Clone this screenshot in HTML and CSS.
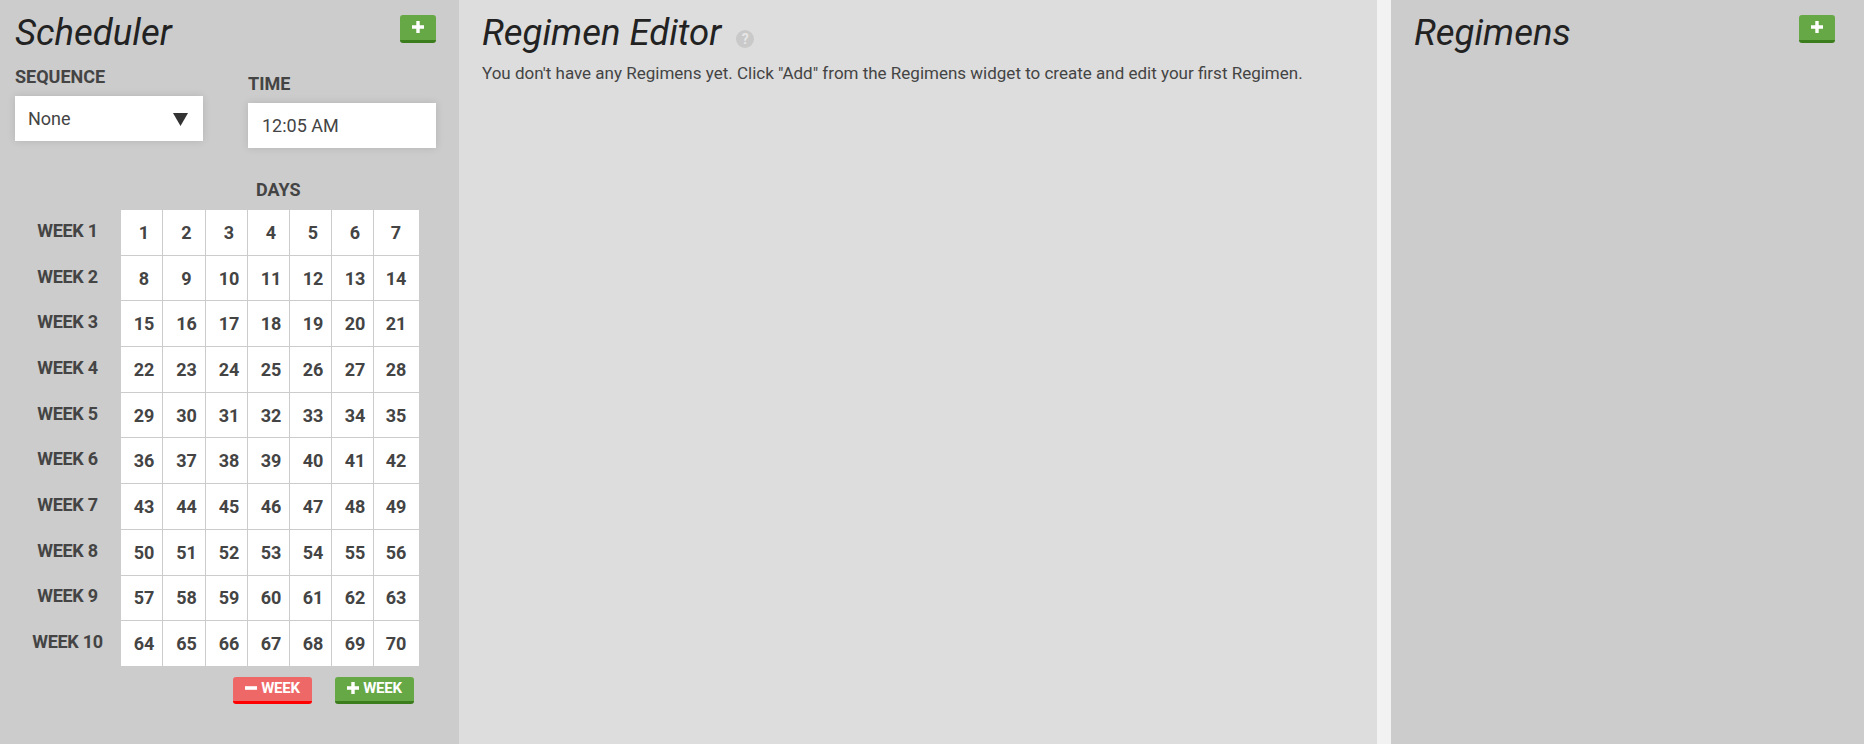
FILE: index.html
```html
<!DOCTYPE html>
<html lang="en">
<head>
<meta charset="utf-8">
<title>Regimens</title>
<link rel="stylesheet" href="styles.css">
</head>
<body>
<div class="app">
  <section class="panel scheduler">
    <div class="panel-head">
      <h3 class="title">Scheduler</h3>
      <button class="add-btn" type="button" aria-label="Add">
        <svg width="12" height="12" viewBox="0 0 12 12"><path d="M6 0v12M0 6h12" stroke="#fff" stroke-width="3.4"/></svg>
      </button>
    </div>
    <div class="fields">
      <div class="field">
        <label class="field-label">SEQUENCE</label>
        <div class="box select">
          <span>None</span>
          <svg class="caret" width="15" height="13" viewBox="0 0 15 13"><polygon points="0,0 15,0 7.5,13" fill="#333"/></svg>
        </div>
      </div>
      <div class="field field-time">
        <label class="field-label">TIME</label>
        <div class="box input">12:05 AM</div>
      </div>
    </div>
    <div class="days-label">DAYS</div>
    <div class="calendar">
      <div class="week">WEEK 1</div><div class="day">1</div><div class="day">2</div><div class="day">3</div><div class="day">4</div><div class="day">5</div><div class="day">6</div><div class="day last">7</div>
      <div class="week">WEEK 2</div><div class="day">8</div><div class="day">9</div><div class="day">10</div><div class="day">11</div><div class="day">12</div><div class="day">13</div><div class="day last">14</div>
      <div class="week">WEEK 3</div><div class="day">15</div><div class="day">16</div><div class="day">17</div><div class="day">18</div><div class="day">19</div><div class="day">20</div><div class="day last">21</div>
      <div class="week">WEEK 4</div><div class="day">22</div><div class="day">23</div><div class="day">24</div><div class="day">25</div><div class="day">26</div><div class="day">27</div><div class="day last">28</div>
      <div class="week">WEEK 5</div><div class="day">29</div><div class="day">30</div><div class="day">31</div><div class="day">32</div><div class="day">33</div><div class="day">34</div><div class="day last">35</div>
      <div class="week">WEEK 6</div><div class="day">36</div><div class="day">37</div><div class="day">38</div><div class="day">39</div><div class="day">40</div><div class="day">41</div><div class="day last">42</div>
      <div class="week">WEEK 7</div><div class="day">43</div><div class="day">44</div><div class="day">45</div><div class="day">46</div><div class="day">47</div><div class="day">48</div><div class="day last">49</div>
      <div class="week">WEEK 8</div><div class="day">50</div><div class="day">51</div><div class="day">52</div><div class="day">53</div><div class="day">54</div><div class="day">55</div><div class="day last">56</div>
      <div class="week">WEEK 9</div><div class="day">57</div><div class="day">58</div><div class="day">59</div><div class="day">60</div><div class="day">61</div><div class="day">62</div><div class="day last">63</div>
      <div class="week">WEEK 10</div><div class="day">64</div><div class="day">65</div><div class="day">66</div><div class="day">67</div><div class="day">68</div><div class="day">69</div><div class="day last">70</div>
    </div>
    <div class="week-buttons">
      <button class="week-btn red" type="button">
        <svg width="12" height="12" viewBox="0 0 12 12"><path d="M0 6h12" stroke="#fff" stroke-width="3.6"/></svg>
        <span>WEEK</span>
      </button>
      <button class="week-btn green" type="button">
        <svg width="12" height="12" viewBox="0 0 12 12"><path d="M6 0v12M0 6h12" stroke="#fff" stroke-width="3.4"/></svg>
        <span>WEEK</span>
      </button>
    </div>
  </section>

  <section class="panel editor">
    <div class="panel-head editor-head">
      <h3 class="title">Regimen Editor</h3>
      <span class="help">?</span>
    </div>
    <p class="empty-text">You don't have any Regimens yet. Click "Add" from the Regimens widget to create and edit your first Regimen.</p>
  </section>

  <div class="divider"></div>

  <section class="panel regimens">
    <div class="panel-head">
      <h3 class="title">Regimens</h3>
      <button class="add-btn" type="button" aria-label="Add">
        <svg width="12" height="12" viewBox="0 0 12 12"><path d="M6 0v12M0 6h12" stroke="#fff" stroke-width="3.4"/></svg>
      </button>
    </div>
  </section>
</div>
</body>
</html>
```

FILE: styles.css
```css
* {
  box-sizing: border-box;
}

html, body {
  margin: 0;
  padding: 0;
}

body {
  font-family: Roboto, "Liberation Sans", sans-serif;
  color: #444;
  background: #f2f2f2;
}

.app {
  display: flex;
  width: 1864px;
  height: 744px;
  overflow: hidden;
}

.panel {
  height: 744px;
}

.scheduler {
  width: 459px;
  flex: 0 0 459px;
  background: #cccccc;
  padding: 0 23px 0 15px;
}

.editor {
  flex: 1 1 auto;
  background: #dddddd;
  padding: 0 23px;
}

.divider {
  flex: 0 0 14px;
  background: #f2f2f2;
}

.regimens {
  flex: 0 0 473px;
  width: 473px;
  background: #cccccc;
  padding: 0 29px 0 23px;
}

.panel-head {
  display: flex;
  justify-content: space-between;
  align-items: flex-start;
  height: 54px;
}

.title {
  margin: 12px 0 0;
  font-size: 36.5px;
  line-height: 42px;
  font-weight: 400;
  font-style: italic;
  color: #222;
}

.add-btn {
  margin-top: 15px;
  width: 36px;
  height: 28px;
  padding: 0 0 3px;
  border: none;
  border-bottom: 3px solid #3b7d1c;
  border-radius: 3px;
  background: #66a845;
  display: flex;
  align-items: center;
  justify-content: center;
}

.add-btn svg {
  display: block;
  margin-top: 1px;
}

.fields {
  display: flex;
  gap: 45px;
  margin-top: 12px;
}

.field {
  width: 188px;
}

.field-time {
  margin-top: 7px;
}

.field-label {
  display: block;
  font-size: 18px;
  line-height: 21px;
  font-weight: 700;
  color: #444;
  margin-bottom: 9px;
}

.box {
  height: 45px;
  background: #fff;
  box-shadow: 0 0 8px rgba(0, 0, 0, 0.12);
  font-size: 18px;
  color: #444;
  display: flex;
  align-items: center;
}

.select {
  justify-content: space-between;
  padding: 0 15px 0 13px;
}

.caret {
  display: block;
  margin-top: 2px;
}

.input {
  padding-left: 14px;
}

.days-label {
  margin-top: 31px;
  padding-left: 241px;
  font-size: 18px;
  line-height: 21px;
  font-weight: 700;
  color: #444;
}

.calendar {
  margin-top: 10px;
  display: grid;
  grid-template-columns: 105px 41px 42px 41px 41px 41px 41px 45px;
  grid-auto-rows: 44.7px;
  gap: 1px;
  width: 404px;
  background: #cccccc;
}

.week {
  display: flex;
  align-items: center;
  justify-content: center;
  padding-bottom: 4px;
  font-size: 18px;
  font-weight: 700;
  letter-spacing: -0.3px;
  color: #444;
  white-space: nowrap;
}

.day {
  background: #fff;
  display: flex;
  align-items: center;
  justify-content: center;
  padding-left: 5px;
  font-size: 18px;
  font-weight: 700;
  color: #444;
}

.day.last {
  padding-left: 0;
  padding-right: 1px;
}

.week-buttons {
  display: flex;
  gap: 23px;
  margin-top: 11px;
  padding-left: 218px;
}

.week-btn {
  width: 79px;
  height: 27px;
  border: none;
  border-radius: 3px;
  padding: 0 0 2px;
  display: flex;
  align-items: center;
  justify-content: center;
  gap: 4px;
  font-family: Roboto, "Liberation Sans", sans-serif;
  font-size: 15px;
  font-weight: 700;
  color: #fff;
  letter-spacing: -0.2px;
}

.week-btn svg {
  display: block;
}

.week-btn.red {
  background: #ef6868;
  border-bottom: 3px solid #ff0000;
}

.week-btn.green {
  background: #66a845;
  border-bottom: 3px solid #3b7d1c;
}

.editor-head {
  justify-content: flex-start;
}

.help {
  margin: 30px 0 0 15px;
  width: 18px;
  height: 18px;
  border-radius: 50%;
  background: #c9c9c9;
  color: #e6e6e6;
  font-size: 14px;
  font-weight: 700;
  line-height: 18px;
  text-align: center;
}

.empty-text {
  margin: 9px 0 0;
  font-size: 17px;
  line-height: 20px;
  color: #444;
}
```
